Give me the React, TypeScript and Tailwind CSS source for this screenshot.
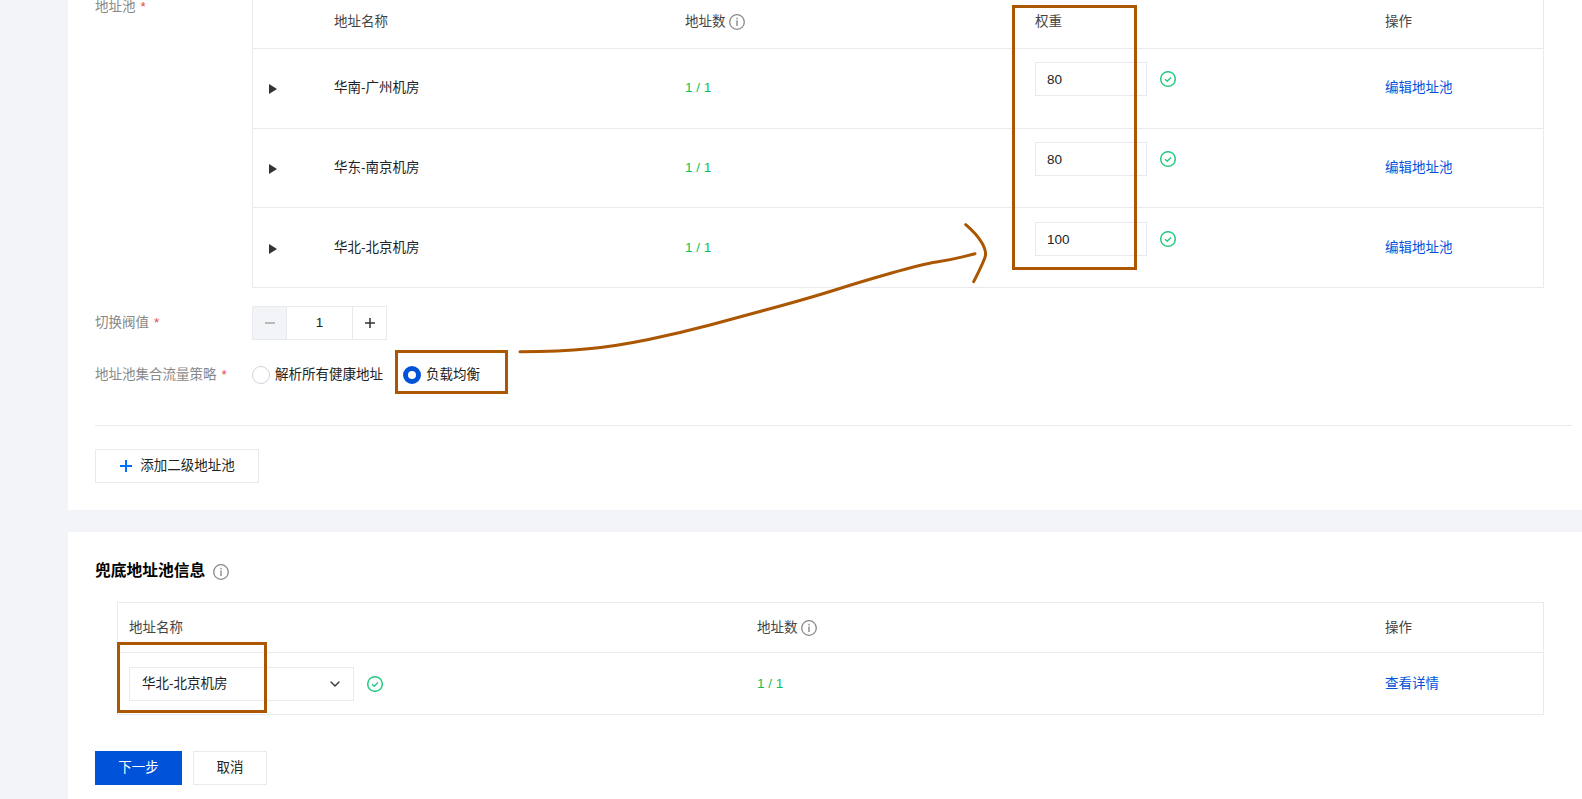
import { ChevronDown } from "lucide-react";

const font = "font-['Liberation_Sans','Noto_Sans_CJK_SC',sans-serif]";

const pools = [
  { name: "华南-广州机房", weight: "80", rowClass: "h-[80px]" },
  { name: "华东-南京机房", weight: "80", rowClass: "h-[79px]" },
  { name: "华北-北京机房", weight: "100", rowClass: "h-[79px] pt-px" },
];

const watermarkRows = [0, 1, 2, 3, 4, 5, 6, 7, 8];

// hand drawn arrow from the screenshot annotation
const arrowLine: [number, number][] = [
  [520, 351.7], [560, 351.7], [617, 346], [680, 333], [740, 317],
  [813, 297], [860, 282], [923, 264], [950, 260], [975, 253.7],
];
const arrowHead: [number, number][] = [
  [965.7, 224.7], [976.7, 234], [987, 251.7], [983, 263], [973.7, 281.7],
];

function smooth(points: [number, number][]) {
  let d = `M${points[0][0]} ${points[0][1]}`;
  for (let i = 1; i < points.length - 1; i++) {
    const midX = (points[i][0] + points[i + 1][0]) / 2;
    const midY = (points[i][1] + points[i + 1][1]) / 2;
    d += ` Q${points[i][0]} ${points[i][1]} ${midX} ${midY}`;
  }
  const last = points[points.length - 1];
  return `${d} L${last[0]} ${last[1]}`;
}

function InfoIcon() {
  return (
    <svg width="16" height="16" viewBox="0 0 16 16" fill="none" className="shrink-0">
      <circle cx="8" cy="8" r="7.3" stroke="#888" strokeWidth="1.3" />
      <rect x="7.3" y="3.8" width="1.4" height="1.5" fill="#888" />
      <rect x="7.3" y="6.4" width="1.4" height="5.6" fill="#888" />
    </svg>
  );
}

function CheckIcon() {
  return (
    <svg width="16" height="16" viewBox="0 0 16 16" fill="none" className="shrink-0">
      <circle cx="8" cy="8" r="7.3" stroke="#29cc85" strokeWidth="1.5" />
      <path d="M5 8.2l2.2 2.1L11 6.4" stroke="#29cc85" strokeWidth="1.5" />
    </svg>
  );
}

function Required({ label }: { label: string }) {
  return (
    <span className="text-[#888]">
      {label}
      <span className="ml-[5px] text-[#e54545]">*</span>
    </span>
  );
}

export default function App() {
  return (
    <div className={`relative h-[799px] overflow-hidden bg-[#f2f4f8] pl-[68px] text-[13.5px] leading-5 text-[#222] ${font}`}>
      {/* first card, scrolled so its top is cut off */}
      <section className="bg-white pb-[27px] pl-[27px] pr-[10px]">
        <div className="flex">
          <div className="-mt-[3px] w-[157px] shrink-0">
            <Required label="地址池" />
          </div>
          <div className="w-[1292px] border-x border-b border-[#e7eaef]">
            <div className="grid h-[49px] grid-cols-[81px_351px_350px_350px_1fr] border-b border-[#e7eaef] pt-[12px] text-[#444]">
              <div />
              <div>地址名称</div>
              <div className="flex items-center gap-[3px] self-start">
                地址数
                <InfoIcon />
              </div>
              <div>权重</div>
              <div>操作</div>
            </div>
            {pools.map((pool, i) => (
              <div
                key={pool.name}
                className={`grid grid-cols-[81px_351px_350px_350px_1fr] ${pool.rowClass} ${i < pools.length - 1 ? "border-b border-[#e7eaef]" : ""}`}
              >
                <div className="pl-[16px] pt-[35px]">
                  <svg width="8" height="10" viewBox="0 0 8 10" className="block">
                    <path d="M0 0l8 5-8 5z" fill="#333" />
                  </svg>
                </div>
                <div className="pt-[29px]">{pool.name}</div>
                <div className="pt-[29px] text-[#0abf5b]">1 / 1</div>
                <div className="flex items-start gap-[13px] pt-[13px]">
                  <input
                    readOnly
                    value={pool.weight}
                    className="h-[34px] w-[112px] border border-[#e7eaef] bg-white pl-[11px] outline-none"
                  />
                  <div className="pt-[9px]">
                    <CheckIcon />
                  </div>
                </div>
                <div className="pt-[29px]">
                  <a className="text-[#0052d9]">编辑地址池</a>
                </div>
              </div>
            ))}
          </div>
        </div>

        <div className="mt-[18px] flex items-center">
          <div className="w-[157px] shrink-0">
            <Required label="切换阀值" />
          </div>
          <div className="flex h-[34px] border border-[#e7eaef]">
            <div className="flex w-[34px] items-center justify-center border-r border-[#e7eaef] bg-[#f2f4f8]">
              <span className="h-[2px] w-[10px] bg-[#bbb]" />
            </div>
            <div className="flex w-[65px] items-center justify-center">1</div>
            <div className="flex w-[34px] items-center justify-center border-l border-[#e7eaef]">
              <svg width="10" height="10" viewBox="0 0 10 10">
                <path d="M0 5h10M5 0v10" stroke="#333" strokeWidth="1.5" />
              </svg>
            </div>
          </div>
        </div>

        <div className="mt-[18px] flex h-[34px] items-center">
          <div className="w-[157px] shrink-0">
            <Required label="地址池集合流量策略" />
          </div>
          <label className="flex items-center gap-[5px]">
            <span className="size-[18px] rounded-full border border-[#cfd5de] bg-white" />
            解析所有健康地址
          </label>
          <label className="ml-[20px] flex items-center gap-[5px]">
            <span className="size-[18px] rounded-full border-[5px] border-[#0052d9] bg-white" />
            负载均衡
          </label>
        </div>

        <div className="mt-[33px] h-px bg-[#e7eaef]" />

        <button className="mt-[23px] flex h-[34px] w-[164px] items-center justify-center gap-[8px] border border-[#e7eaef] bg-white pl-px">
          <svg width="12" height="12" viewBox="0 0 12 12">
            <path d="M0 6h12M6 0v12" stroke="#006eff" strokeWidth="2" />
          </svg>
          添加二级地址池
        </button>
      </section>

      {/* fallback pool card */}
      <section className="mt-[22px] h-[300px] bg-white pl-[27px] pt-[27px]">
        <div className="flex items-center gap-[8px]">
          <h2 className="text-[15.75px] font-bold leading-6 text-black">兜底地址池信息</h2>
          <div className="pt-[2px]">
            <InfoIcon />
          </div>
        </div>

        <div className="ml-[22px] mt-[19px] w-[1427px] border border-[#e7eaef]">
          <div className="grid h-[50px] grid-cols-[628px_628px_1fr] items-center border-b border-[#e7eaef] text-[#444]">
            <div className="pl-[11px]">地址名称</div>
            <div className="flex items-center gap-[3px] pl-[11px]">
              地址数
              <InfoIcon />
            </div>
            <div className="pl-[11px]">操作</div>
          </div>
          <div className="grid h-[61px] grid-cols-[628px_628px_1fr] items-center">
            <div className="flex items-center gap-[13px] pl-[11px]">
              <div className="flex h-[34px] w-[225px] items-center justify-between border border-[#e7eaef] pl-[12px] pr-[10px]">
                华北-北京机房
                <ChevronDown size={16} strokeWidth={2} color="#333" />
              </div>
              <CheckIcon />
            </div>
            <div className="pl-[11px] text-[#0abf5b]">1 / 1</div>
            <div className="pl-[11px]">
              <a className="text-[#0052d9]">查看详情</a>
            </div>
          </div>
        </div>

        <div className="mt-[36px] flex gap-[11px]">
          <button className="h-[34px] w-[87px] bg-[#0052d9] text-white">下一步</button>
          <button className="h-[34px] w-[74px] border border-[#e7eaef] bg-white">取消</button>
        </div>
      </section>

      {/* faint account watermark over the page */}
      <div className="pointer-events-none absolute inset-0 flex flex-col gap-[43px] overflow-hidden whitespace-nowrap pt-[2px] text-[32px] leading-[44px] text-black/[0.012] select-none">
        {watermarkRows.map((row) => (
          <div key={row}>
            yangwenwb_yangwenwb_yangwenwb_yangwenwb_yangwenwb_yangwenwb_yangwenwb_yangwenwb_yangwenwb_
          </div>
        ))}
      </div>

      {/* screenshot annotations */}
      <div className="absolute left-[1012px] top-[5px] h-[265px] w-[125px] border-[3px] border-[#ab5600]" />
      <div className="absolute left-[395px] top-[350px] h-[44px] w-[113px] border-[3px] border-[#ab5600]" />
      <div className="absolute left-[117px] top-[642px] h-[71px] w-[150px] border-[3px] border-[#ab5600]" />
      <svg className="pointer-events-none absolute left-0 top-0" width="1582" height="799" fill="none">
        <path d={smooth(arrowLine)} stroke="#ab5600" strokeWidth="3" strokeLinecap="round" />
        <path d={smooth(arrowHead)} stroke="#ab5600" strokeWidth="3" strokeLinecap="round" />
      </svg>
    </div>
  );
}
